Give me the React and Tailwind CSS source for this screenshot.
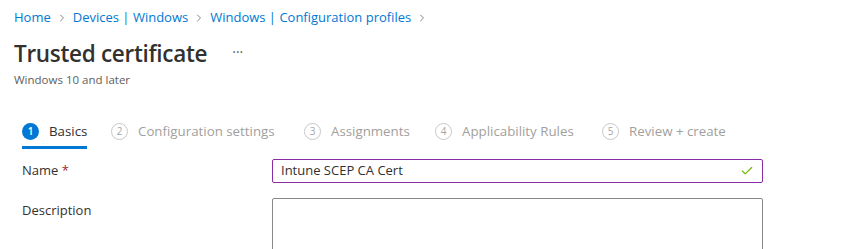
import { Check, ChevronRight } from 'lucide-react';

const crumbs = ['Home', 'Devices | Windows', 'Windows | Configuration profiles'];

const steps = [
  { n: 1, label: 'Basics', w: 'w-[89px]', active: true },
  { n: 2, label: 'Configuration settings', w: 'w-[193px]' },
  { n: 3, label: 'Assignments', w: 'w-[131px]' },
  { n: 4, label: 'Applicability Rules', w: 'w-[167px]' },
  { n: 5, label: 'Review + create', w: 'w-[140px]' },
];

function Step({ n, label, w, active }) {
  return (
    <div className={`${w} shrink-0`}>
      <div className="inline-flex flex-col">
        <div className="flex items-center gap-[10px] h-[22px]">
          {active ? (
            <span className="w-[17px] h-[17px] rounded-full bg-[#0078d4] text-white text-[10px] font-semibold flex items-center justify-center">
              {n}
            </span>
          ) : (
            <span className="w-[17px] h-[17px] rounded-full border border-[#c8c8c8] text-[#a6a6a6] text-[10px] flex items-center justify-center">
              {n}
            </span>
          )}
          <span className={`text-[13.3px] ${active ? 'text-[#323130]' : 'text-[#a19f9d]'}`}>{label}</span>
        </div>
        <div className={`h-[3px] mt-[3px] ${active ? 'bg-[#0078d4]' : 'bg-transparent'}`} />
      </div>
    </div>
  );
}

export default function App() {
  return (
    <div className="w-[866px] h-[249px] overflow-hidden bg-white" style={{ fontFamily: '"Open Sans", "Noto Sans", sans-serif' }}>
      <div className="pl-[14px] pt-[8px]">
        <nav className="flex items-center h-[20px] text-[13px] text-[#0078d4]">
          {crumbs.map((c) => (
            <span key={c} className="flex items-center">
              <span>{c}</span>
              <ChevronRight className="w-[12px] h-[12px] mx-[5px] text-[#605e5c]" strokeWidth={1.5} />
            </span>
          ))}
        </nav>
        <div className="flex items-center mt-[10px] h-[32px]">
          <h1 className="text-[22.5px] font-semibold text-[#323130] tracking-[-0.3px]">Trusted certificate</h1>
          <span className="ml-[25px] text-[#605e5c] text-[14px] leading-none -mt-[4px]">···</span>
        </div>
        <div className="text-[11.5px] text-[#605e5c] mt-[1px]">Windows 10 and later</div>
      </div>

      <div className="flex pl-[22px] mt-[29px]">
        {steps.map((s) => (
          <Step key={s.n} {...s} />
        ))}
      </div>

      <div className="pl-[22px] pr-[103px] mt-[10px]">
        <div className="flex items-center h-[24px]">
          <label className="w-[250px] text-[13px] text-[#323130]">
            Name <span className="text-[#a4262c]">*</span>
          </label>
          <div className="flex-1 h-[24px] border border-[#8a2da5] rounded-[2px] flex items-center px-[8px]">
            <span className="flex-1 text-[13px] text-[#323130]">Intune SCEP CA Cert</span>
            <Check className="w-[14px] h-[14px] text-[#6bb700]" strokeWidth={2} />
          </div>
        </div>
        <div className="flex mt-[15px]">
          <label className="w-[250px] text-[13px] text-[#323130] pt-[3px]">Description</label>
          <div className="flex-1 h-[70px] border border-[#8a8886] rounded-[2px]" />
        </div>
      </div>
    </div>
  );
}
